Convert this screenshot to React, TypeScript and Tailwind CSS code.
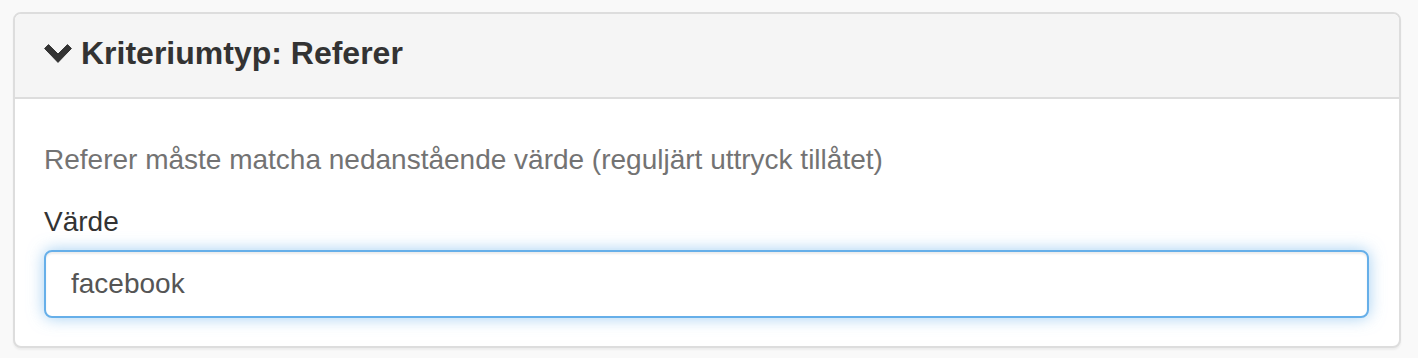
import React from "react";

function ChevronDownIcon() {
  return (
    <svg
      viewBox="0 0 28 19"
      className="h-[19px] w-[28px] shrink-0 fill-[#333333]"
      aria-hidden="true"
    >
      <path
        d="M0.6 4.5 L4.5 0.6 L14 10 L23.5 0.6 L27.4 4.5 L14 18.4 Z"
        strokeLinejoin="round"
        className="stroke-[#333333]"
        strokeWidth="1"
      />
    </svg>
  );
}

export default function App() {
  const [value, setValue] = React.useState("facebook");

  return (
    <div className="min-h-[358px] w-full bg-[#f9f9f9] pt-[12px] pl-[13px] font-['Liberation_Sans',Arial,sans-serif]">
      <div className="w-[1388px] overflow-hidden rounded-[8px] border-2 border-[#dddddd] bg-white shadow-[0_2px_2px_rgba(0,0,0,0.05)]">
        <div className="border-b-2 border-[#dddddd] bg-[#f5f5f5] pt-[22px] pb-[26px] pl-[29px]">
          <h3 className="flex items-center gap-[9px] text-[32px] leading-[35px] font-bold text-[#333333]">
            <ChevronDownIcon />
            <span>Kriteriumtyp: Referer</span>
          </h3>
        </div>

        <div className="pt-[41px] pr-[30px] pb-[28px] pl-[29px]">
          <p className="text-[28px] leading-[40px] text-[#737373]">
            Referer måste matcha nedanstående värde (reguljärt uttryck tillåtet)
          </p>

          <label
            htmlFor="criteria-value"
            className="mt-[22px] mb-[8px] block text-[28px] leading-[40px] text-[#333333]"
          >
            Värde
          </label>
          <input
            id="criteria-value"
            type="text"
            value={value}
            onChange={(e) => setValue(e.target.value)}
            className="block h-[68px] w-full rounded-[8px] border-2 border-[#66afe9] bg-white px-[25px] text-[28px] text-[#555555] shadow-[inset_0_2px_2px_rgba(0,0,0,0.075),0_0_16px_rgba(102,175,233,0.6)] outline-none"
          />
        </div>
      </div>
    </div>
  );
}
